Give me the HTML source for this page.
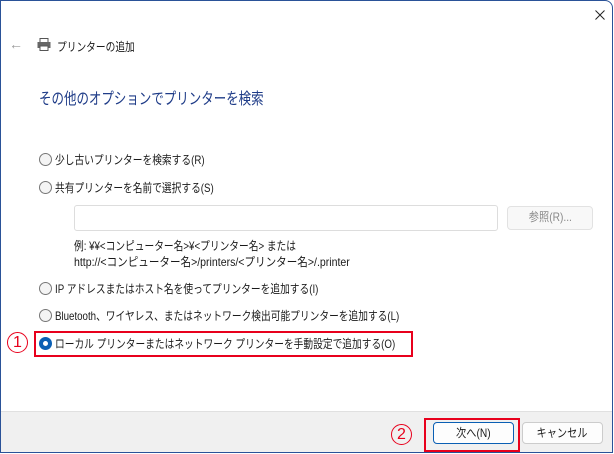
<!DOCTYPE html>
<html><head><meta charset="utf-8"><style>
*{margin:0;padding:0;box-sizing:border-box}
body{width:614px;height:454px;background:#fff;position:relative;overflow:hidden;font-family:"Liberation Sans","Noto Sans CJK JP",sans-serif;font-size:12px;color:#1a1a1a}
.a{position:absolute;white-space:nowrap}
.s{transform:scaleX(0.81);transform-origin:0 0}
.win{position:absolute;left:0;top:0;width:613px;height:453px;border:1px solid #2a5298;border-radius:0 8px 0 0;background:#fff}
.r{position:absolute;width:13px;height:13px;border:1px solid #777;border-radius:50%;background:#f4f4f4}
.btn{position:absolute;height:22px;border:1px solid #ccc;border-radius:4px;background:#fdfdfd;text-align:center;line-height:20px}
.red{position:absolute;border:2px solid #e8001c}
.c{position:absolute;width:21px;height:21px;border:1.5px solid #e8001c;border-radius:50%;color:#e8001c;text-align:center;line-height:19px;font-size:16px}
</style></head><body>
<div class="win"></div>
<svg class="a" style="left:595px;top:10px" width="10" height="10" viewBox="0 0 10 10"><path d="M0.5 0.5L9.5 9.5M9.5 0.5L0.5 9.5" stroke="#222" stroke-width="1"/></svg>
<div class="a" style="left:9px;top:36px;font-size:14px;color:#999">←</div>
<svg class="a" style="left:37px;top:38px" width="14" height="13" viewBox="0 0 14 13"><rect x="3" y="0.5" width="8" height="4" fill="#fff" stroke="#555"/><rect x="0.5" y="4" width="13" height="6" fill="#666"/><rect x="3" y="8" width="8" height="4.5" fill="#fff" stroke="#555"/></svg>
<div class="a s" style="left:57px;top:38px">プリンターの追加</div>
<div class="a" style="left:39px;top:85px;font-size:16px;color:#1f3c88;transform:scaleX(0.78);transform-origin:0 0">その他のオプションでプリンターを検索</div>
<div class="r" style="left:39px;top:153px"></div><div class="a s" style="left:55px;top:151px">少し古いプリンターを検索する(R)</div>
<div class="r" style="left:39px;top:181px"></div><div class="a s" style="left:55px;top:179px">共有プリンターを名前で選択する(S)</div>
<div class="a" style="left:74px;top:205px;width:424px;height:26px;border:1px solid #ddd;border-radius:3px"></div>
<div class="btn" style="left:507px;top:206px;width:86px;height:24px;color:#888;background:#f8f8f8;border-color:#e2e2e2"><span style="display:inline-block;transform:scaleX(0.85)">参照(R)...</span></div>
<div class="a s" style="left:74px;top:237px">例: ¥¥&lt;コンピューター名&gt;¥&lt;プリンター名&gt; または</div>
<div class="a" style="left:74px;top:253px;transform:scaleX(0.88);transform-origin:0 0">http://&lt;コンピューター名&gt;/printers/&lt;プリンター名&gt;/.printer</div>
<div class="r" style="left:39px;top:282px"></div><div class="a s" style="left:55px;top:280px">IP アドレスまたはホスト名を使ってプリンターを追加する(I)</div>
<div class="r" style="left:39px;top:309px"></div><div class="a s" style="left:55px;top:307px">Bluetooth、ワイヤレス、またはネットワーク検出可能プリンターを追加する(L)</div>
<div class="r" style="left:39px;top:337px;border:4px solid #0a5fb4;background:#fff"></div><div class="a s" style="left:55px;top:335px">ローカル プリンターまたはネットワーク プリンターを手動設定で追加する(O)</div>
<div class="red" style="left:34px;top:331px;width:379px;height:26px"></div>
<div class="c" style="left:7px;top:332px">1</div>
<div class="a" style="left:1px;top:411px;width:611px;height:41px;background:#f0f0f0;border-top:1px solid #e0e0e0"></div>
<div class="btn" style="left:433px;top:422px;width:81px;border-color:#0a5fb4"><span style="display:inline-block;transform:scaleX(0.85)">次へ(N)</span></div>
<div class="btn" style="left:522px;top:422px;width:81px"><span style="display:inline-block;transform:scaleX(0.85)">キャンセル</span></div>
<div class="red" style="left:424px;top:418px;width:96px;height:34px"></div>
<div class="c" style="left:391px;top:424px">2</div>
</body></html>
